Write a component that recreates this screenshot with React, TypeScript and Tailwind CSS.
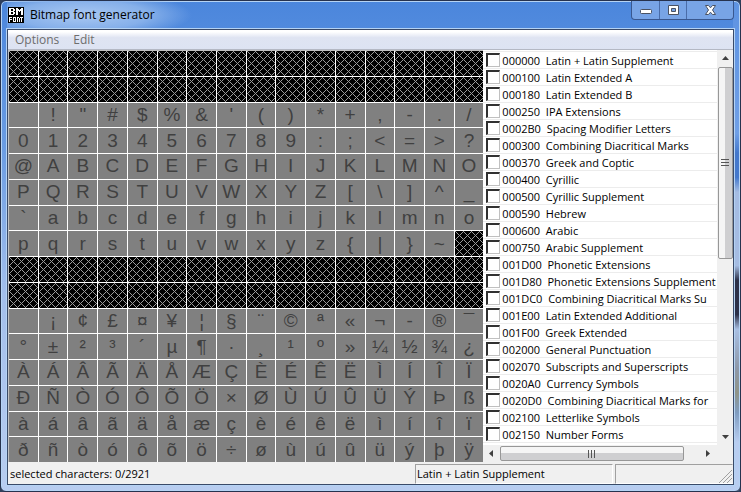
import React from "react";

const BLANK = "\u0000";
const glyphRows: string[] = [
  BLANK.repeat(16),
  BLANK.repeat(16),
  " !\"#$%&'()*+,-./",
  "0123456789:;<=>?",
  "@ABCDEFGHIJKLMNO",
  "PQRSTUVWXYZ[\\]^_",
  "`abcdefghijklmno",
  "pqrstuvwxyz{|}~" + BLANK,
  BLANK.repeat(16),
  BLANK.repeat(16),
  " ¡¢£¤¥¦§¨©ª«¬-®¯",
  "°±²³´µ¶·¸¹º»¼½¾¿",
  "ÀÁÂÃÄÅÆÇÈÉÊËÌÍÎÏ",
  "ÐÑÒÓÔÕÖ×ØÙÚÛÜÝÞß",
  "àáâãäåæçèéêëìíîï",
  "ðñòóôõö÷øùúûüýþÿ",
];

const blocks: [string, string][] = [
  ["000000", "Latin + Latin Supplement"],
  ["000100", "Latin Extended A"],
  ["000180", "Latin Extended B"],
  ["000250", "IPA Extensions"],
  ["0002B0", "Spacing Modifier Letters"],
  ["000300", "Combining Diacritical Marks"],
  ["000370", "Greek and Coptic"],
  ["000400", "Cyrillic"],
  ["000500", "Cyrillic Supplement"],
  ["000590", "Hebrew"],
  ["000600", "Arabic"],
  ["000750", "Arabic Supplement"],
  ["001D00", "Phonetic Extensions"],
  ["001D80", "Phonetic Extensions Supplement"],
  ["001DC0", "Combining Diacritical Marks Su"],
  ["001E00", "Latin Extended Additional"],
  ["001F00", "Greek Extended"],
  ["002000", "General Punctuation"],
  ["002070", "Subscripts and Superscripts"],
  ["0020A0", "Currency Symbols"],
  ["0020D0", "Combining Diacritical Marks for"],
  ["002100", "Letterlike Symbols"],
  ["002150", "Number Forms"],
];

function Logo() {
  return (
    <svg width="16" height="16" viewBox="0 0 16 16" shapeRendering="crispEdges" aria-hidden="true">
      <rect width="16" height="16" rx="1" fill="#000" />
      <g fill="#fff">
        <path fillRule="evenodd" d="M1 1h5v1h1v2h-1v1h1v2h-1v1H1zM3 2v2h2V2zM3 5v2h2V5z" />
        <path d="M8 1h2v1h1v1h1V2h1V1h2v7h-2V4h-1v1h-1V4h-1v4H8z" />
        <path d="M1 10h3v1H2v1h2v1H2v2H1z" />
        <path fillRule="evenodd" d="M5 10h3v5H5zM6 11v3h1v-3z" />
        <path d="M9 10h2v1h1v4h-1v-4h-1v4H9zM12 10h3v1h-1v4h-1v-4h-1z" />
      </g>
    </svg>
  );
}

function Cell({ char }: { char: string }) {
  if (char === BLANK) {
    return (
      <div className="bg-black">
        <svg width="100%" height="100%" className="block" shapeRendering="crispEdges" aria-hidden="true">
          <rect width="100%" height="100%" fill="url(#hatch)" />
        </svg>
      </div>
    );
  }
  return (
    <div className="flex items-center justify-center overflow-hidden bg-[#808080] font-['Liberation_Sans',Arial,sans-serif] text-[19px] leading-6 text-[#404040]">
      {char}
    </div>
  );
}

function Arrow({ d, label }: { d: string; label: string }) {
  return (
    <button type="button" aria-label={label} className="flex size-[17px] shrink-0 items-center justify-center">
      <svg width="7" height="7" viewBox="0 0 7 7" aria-hidden="true">
        <path d={d} fill="#404040" />
      </svg>
    </button>
  );
}

export default function App() {
  return (
    <div className="h-screen bg-[#30405c] font-['Open_Sans','Noto_Sans',sans-serif] text-xs text-black">
      <svg width="0" height="0" className="absolute" aria-hidden="true">
        <pattern id="hatch" width="8" height="8" patternUnits="userSpaceOnUse">
          <path
            d="M0 0h1v1H0zM1 1h1v1H1zM2 2h1v1H2zM3 3h1v1H3zM4 4h1v1H4zM5 5h1v1H5zM6 6h1v1H6zM7 7h1v1H7zM7 1h1v1H7zM6 2h1v1H6zM5 3h1v1H5zM3 5h1v1H3zM2 6h1v1H2zM1 7h1v1H1z"
            fill="#9a9a9a"
          />
        </pattern>
      </svg>
      <div className="flex h-full flex-col rounded-md border border-[#26324e] bg-[linear-gradient(to_bottom,#5e93e2_0%,#6f9fe6_27%,#4478cc_31%,#4478cc_36%,#a5bce2_39%,#a5bce2_54%,#2c3048_57%,#2c3048_64%,#a9bfe2_67%,#8e98a8_75%,#8f9488_80%,#7f9cc0_84%,#b8cdf0_90%),linear-gradient(to_bottom,#4b86dc_0%,#6a9ce3_30%,#a3bfec_60%,#b8cdf0_100%)] bg-[size:7px_100%,100%_100%] bg-[position:right_top,left_top] bg-no-repeat px-1.5 pb-1.5 shadow-[inset_0_0_0_1px_#b5d3f4]">
        <header className="flex h-7 shrink-0 items-start justify-between bg-[radial-gradient(ellipse_110px_24px_at_75px_14px,#a9c8f2_0%,#86b0ea_60%,transparent_100%)]">
          <div className="flex items-center gap-1.5 pt-1.5 pl-px">
            <Logo />
            <h1 className="text-xs leading-4">Bitmap font generator</h1>
          </div>
          <div className="flex h-[19px] divide-x divide-[#4a6ca8] rounded-b border border-t-0 border-[#39578f] bg-[#78a4e6]">
            <button type="button" aria-label="Minimize" className="flex w-7 items-center justify-center">
              <svg width="13" height="12" viewBox="0 0 13 12" aria-hidden="true">
                <rect x="1.500" y="5.500" width="11" height="4" rx="1" fill="#fff" stroke="#4a5263" />
              </svg>
            </button>
            <button type="button" aria-label="Maximize" className="flex w-[27px] items-center justify-center">
              <svg width="13" height="12" viewBox="0 0 13 12" aria-hidden="true">
                <path d="M1.500 1.500h10v9h-10zM4.500 4.500v3h4v-3z" fill="#fff" stroke="#4a5263" fillRule="evenodd" />
              </svg>
            </button>
            <button type="button" aria-label="Close" className="flex w-[46px] items-center justify-center">
              <svg width="13" height="12" viewBox="0 0 13 12" aria-hidden="true">
                <path d="M1.500 1.500h3l2 2.300 2-2.300h3L8.500 6l3 4.500h-3l-2-2.300-2 2.300h-3L4.500 6z" fill="#fff" stroke="#4a5263" />
              </svg>
            </button>
          </div>
        </header>
        <div className="flex min-h-0 flex-1 flex-col border border-[#3a4a68] bg-[#f0f0f0] outline-1 outline-[#b5d3f4]">
          <nav className="flex h-5 shrink-0 items-center gap-3.5 border-b border-[#b4b8c4] bg-linear-to-b from-white from-10% via-[#dfe4f2] via-40% to-[#dde3f3] px-[7px] text-[#6d6d6d]">
            <button type="button">Options</button>
            <button type="button">Edit</button>
          </nav>
          <main className="flex min-h-0 flex-1">
            <div className="grid flex-[475] auto-rows-fr grid-cols-16 gap-px border-t border-l border-[#c0c0c0] bg-white">
              {glyphRows.flatMap((row, r) => [...row].map((char, c) => <Cell key={`${r}-${c}`} char={char} />))}
            </div>
            <div className="flex min-w-0 flex-[250] flex-col">
              <div className="flex min-h-0 flex-1 bg-white">
                <ul className="min-w-0 flex-1 overflow-hidden pt-px">
                  {blocks.map(([code, name]) => (
                    <li key={code} className="h-[17px] border-t border-[#ececec] last:h-[18px] last:border-b">
                      <label className="flex h-[17px] items-end pl-[3px] text-[11px] leading-4 whitespace-pre">
                        <input type="checkbox" className="mr-[2px] mb-[2px] size-[14px] shrink-0 appearance-none border border-t-2 border-l-2 border-t-[#303030] border-r-[#c0c0c0] border-b-[#c0c0c0] border-l-[#303030] bg-white" />
                        {code}{"  "}{name}
                      </label>
                    </li>
                  ))}
                </ul>
                <div className="flex w-4 shrink-0 flex-col items-center bg-[#f0f0f0]">
                  <Arrow label="Scroll up" d="M0 5L3.500 1 7 5z" />
                  <div className="flex h-[192px] w-[15px] items-center justify-center rounded-xs border border-[#979797] bg-linear-to-r from-[#f5f5f5] from-45% to-[#cfcfd1] to-50%">
                    <svg width="8" height="8" aria-hidden="true"><path d="M0 .5h8M0 3.500h8M0 6.500h8" stroke="#555" /></svg>
                  </div>
                  <div className="flex-1" />
                  <Arrow label="Scroll down" d="M0 2l3.500 4L7 2z" />
                </div>
              </div>
              <div className="flex h-[17px] shrink-0 bg-[#f0f0f0] pr-[17px]">
                <Arrow label="Scroll left" d="M5 0L1 3.500 5 7z" />
                <div className="my-px flex w-[184px] items-center justify-center rounded-xs border border-[#979797] bg-linear-to-b from-[#f5f5f5] from-45% to-[#cfcfd1] to-50%">
                  <svg width="8" height="8" aria-hidden="true"><path d="M.5 0v8M3.500 0v8M6.500 0v8" stroke="#555" /></svg>
                </div>
                <div className="flex-1" />
                <Arrow label="Scroll right" d="M2 0l4 3.500L2 7z" />
              </div>
            </div>
          </main>
          <footer className="flex h-[22px] shrink-0 gap-0.5 pt-0.5 text-[11px] leading-5">
            <div className="flex-1 px-0.5">selected characters: 0/2921</div>
            <div className="w-[198px] border border-t-[#a0a0a0] border-r-white border-b-white border-l-[#a0a0a0] px-px leading-[18px]">Latin + Latin Supplement</div>
            <div className="flex w-[118px] items-end justify-end border border-t-[#a0a0a0] border-r-transparent border-b-white border-l-[#a0a0a0]">
              <svg width="13" height="13" aria-hidden="true"><path d="M0 13L13 0M4 13l9-9M8 13l5-5" stroke="#a0a0a0" /></svg>
            </div>
          </footer>
        </div>
      </div>
    </div>
  );
}
